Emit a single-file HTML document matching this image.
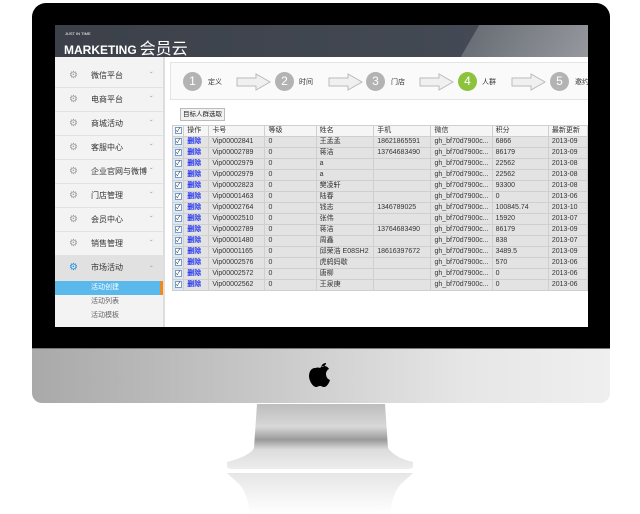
<!DOCTYPE html>
<html><head><meta charset="utf-8"><style>
*{margin:0;padding:0;box-sizing:border-box}
body{width:640px;height:514px;background:#fff;position:relative;overflow:hidden;font-family:"Liberation Sans","Noto Sans CJK SC",sans-serif}
.bezel{position:absolute;left:32px;top:3px;width:578px;height:346px;background:#000;border-radius:14px 14px 0 0}
.chin{position:absolute;left:32px;top:348px;width:578px;height:55px;background:linear-gradient(90deg,#a9a9a9,#c8c8c8 40%,#e6e6e6 75%,#efefef);border-radius:0 0 10px 10px;border-top:1px solid #777}
.screen{position:absolute;left:55px;top:25px;width:533px;height:302px;background:#fff;overflow:hidden}
.hdr{position:absolute;left:0;top:0;width:533px;height:32px;background:linear-gradient(90deg,#3b4049,#464c57)}
.hdr .hl{position:absolute;left:415px;top:0;width:140px;height:32px;background:linear-gradient(90deg,#6a6f77,#9a9da2);transform:skewX(-30deg)}
.logo{position:absolute;left:9px;top:10px;color:#fff;font-size:12px;font-weight:bold;letter-spacing:0}
.logo small{position:absolute;left:1px;top:-4px;font-size:4px;font-weight:normal}
.logo b{font-size:16px;font-weight:normal;margin-left:3px}
.side{position:absolute;left:0;top:32px;width:110px;height:270px;background:#f3f3f3;border-right:2px solid #ddd;padding-top:7px}
.it{height:24px;border-bottom:1px solid #e2e2e2;font-size:8px;color:#333;position:relative;line-height:24px;padding-left:36px}
.it:before{content:"⚙";position:absolute;left:14px;color:#999;font-size:10px;font-family:"DejaVu Sans",sans-serif}
.it:after{content:"ˇ";position:absolute;left:95px;top:0;color:#999;font-size:8px}
.it.act{background:#e1e1e1;height:25px}
.it.act:before{color:#1a8ee0}
.it.act:after{content:"ˆ";top:2px}
.sub{height:14px;font-size:7px;color:#666;line-height:14px;padding-left:36px}
.sub.on{background:#5ab8ea;color:#fff;border-right:3px solid #f08a1c}
.steps{position:absolute;left:115px;top:37px;width:420px;height:38px;background:#fafafa;border:1px solid #e4e4e4}
.c{position:absolute;top:9px;width:19px;height:19px;border-radius:50%;background:#b3b3b3;color:#fff;font-size:12px;text-align:center;line-height:19px}
.c.g{background:#8cc23c}
.sl{position:absolute;top:14px;font-size:7px;color:#333}
.arr{position:absolute;top:10px}
.btn{position:absolute;left:125px;top:83px;width:45px;height:13px;border:1px solid #bbb;background:#f2f2f2;font-size:6.5px;line-height:11px;text-align:center;color:#222}
table{position:absolute;left:117px;top:100px;border-collapse:collapse;font-size:7px;color:#333;background:#e3e3e3}
td{border:1px solid #cfcfcf;height:11px;padding:0 3px;white-space:nowrap;overflow:hidden;line-height:10px}
tr.h td{background:#f5f5f5}
.cb{width:12px;padding:0;text-align:center;background:#dde8f3}
.cb i{display:inline-block;width:7px;height:7px;border:1px solid #7a9cc6;background:#fff;font-size:6px;line-height:6px;color:#124;font-style:normal}
.del{color:#2233ee;font-weight:bold}
.stand{position:absolute;left:0;top:0}
</style></head><body>
<div class="bezel"></div>
<div class="screen">
 <div class="hdr"><div class="hl"></div><div class="logo"><small>JUST IN TIME</small>MARKETING<b>会员云</b></div></div>
 <div class="side">
  <div class="it">微信平台</div><div class="it">电商平台</div><div class="it">商城活动</div><div class="it">客服中心</div><div class="it">企业官网与微博</div><div class="it">门店管理</div><div class="it">会员中心</div><div class="it">销售管理</div><div class="it act">市场活动</div>
  <div class="sub on">活动创建</div><div class="sub">活动列表</div><div class="sub">活动模板</div>
 </div>
 <div class="steps">
  <div class="c" style="left:12px">1</div><div class="sl" style="left:37px">定义</div>
  <svg class="arr" style="left:65px" width="36" height="18"><path d="M1 5H20V1L34 9L20 17V13H1Z" fill="#f0f0f0" stroke="#bbb"/></svg>
  <div class="c" style="left:104px">2</div><div class="sl" style="left:128px">时间</div>
  <svg class="arr" style="left:157px" width="36" height="18"><path d="M1 5H20V1L34 9L20 17V13H1Z" fill="#f0f0f0" stroke="#bbb"/></svg>
  <div class="c" style="left:195px">3</div><div class="sl" style="left:220px">门店</div>
  <svg class="arr" style="left:248px" width="36" height="18"><path d="M1 5H20V1L34 9L20 17V13H1Z" fill="#f0f0f0" stroke="#bbb"/></svg>
  <div class="c g" style="left:287px">4</div><div class="sl" style="left:311px">人群</div>
  <svg class="arr" style="left:340px" width="36" height="18"><path d="M1 5H20V1L34 9L20 17V13H1Z" fill="#f0f0f0" stroke="#bbb"/></svg>
  <div class="c" style="left:379px">5</div><div class="sl" style="left:404px">邀约</div>
 </div>
 <div class="btn">目标人群选取</div>
 <table>
  <tr class="h"><td class="cb"><i>✓</i></td><td style="width:26px">操作</td><td style="width:58px">卡号</td><td style="width:58px">等级</td><td style="width:58px">姓名</td><td style="width:59px">手机</td><td style="width:57px">微信</td><td style="width:60px">积分</td><td style="width:40px">最新更新</td></tr>
  <tr><td class="cb"><i>✓</i></td><td class="del">删除</td><td>Vip00002841</td><td>0</td><td>王孟孟</td><td>18621865591</td><td>gh_bf70d7900c...</td><td>6866</td><td>2013-09</td></tr>
  <tr><td class="cb"><i>✓</i></td><td class="del">删除</td><td>Vip00002789</td><td>0</td><td>蒋洁</td><td>13764683490</td><td>gh_bf70d7900c...</td><td>86179</td><td>2013-09</td></tr>
  <tr><td class="cb"><i>✓</i></td><td class="del">删除</td><td>Vip00002979</td><td>0</td><td>a</td><td></td><td>gh_bf70d7900c...</td><td>22562</td><td>2013-08</td></tr>
  <tr><td class="cb"><i>✓</i></td><td class="del">删除</td><td>Vip00002979</td><td>0</td><td>a</td><td></td><td>gh_bf70d7900c...</td><td>22562</td><td>2013-08</td></tr>
  <tr><td class="cb"><i>✓</i></td><td class="del">删除</td><td>Vip00002823</td><td>0</td><td>樊凌轩</td><td></td><td>gh_bf70d7900c...</td><td>93300</td><td>2013-08</td></tr>
  <tr><td class="cb"><i>✓</i></td><td class="del">删除</td><td>Vip00001463</td><td>0</td><td>陆春</td><td></td><td>gh_bf70d7900c...</td><td>0</td><td>2013-06</td></tr>
  <tr><td class="cb"><i>✓</i></td><td class="del">删除</td><td>Vip00002764</td><td>0</td><td>钱志</td><td>1346789025</td><td>gh_bf70d7900c...</td><td>100845.74</td><td>2013-10</td></tr>
  <tr><td class="cb"><i>✓</i></td><td class="del">删除</td><td>Vip00002510</td><td>0</td><td>张伟</td><td></td><td>gh_bf70d7900c...</td><td>15920</td><td>2013-07</td></tr>
  <tr><td class="cb"><i>✓</i></td><td class="del">删除</td><td>Vip00002789</td><td>0</td><td>蒋洁</td><td>13764683490</td><td>gh_bf70d7900c...</td><td>86179</td><td>2013-09</td></tr>
  <tr><td class="cb"><i>✓</i></td><td class="del">删除</td><td>Vip00001480</td><td>0</td><td>周鑫</td><td></td><td>gh_bf70d7900c...</td><td>838</td><td>2013-07</td></tr>
  <tr><td class="cb"><i>✓</i></td><td class="del">删除</td><td>Vip00001165</td><td>0</td><td>邱荣浩 E08SH2</td><td>18616397672</td><td>gh_bf70d7900c...</td><td>3489.5</td><td>2013-09</td></tr>
  <tr><td class="cb"><i>✓</i></td><td class="del">删除</td><td>Vip00002576</td><td>0</td><td>虎鸫妈歇</td><td></td><td>gh_bf70d7900c...</td><td>570</td><td>2013-06</td></tr>
  <tr><td class="cb"><i>✓</i></td><td class="del">删除</td><td>Vip00002572</td><td>0</td><td>唐柳</td><td></td><td>gh_bf70d7900c...</td><td>0</td><td>2013-06</td></tr>
  <tr><td class="cb"><i>✓</i></td><td class="del">删除</td><td>Vip00002562</td><td>0</td><td>王泉庚</td><td></td><td>gh_bf70d7900c...</td><td>0</td><td>2013-06</td></tr>
 </table>
</div>
<div class="chin"></div>
<svg class="stand" width="640" height="514">
 <defs>
  <linearGradient id="sg" x1="0" y1="0" x2="0" y2="1">
   <stop offset="0" stop-color="#bdbdbd"/><stop offset=".35" stop-color="#d8d8d8"/><stop offset=".55" stop-color="#9a9a9a"/><stop offset=".7" stop-color="#dcdcdc"/><stop offset="1" stop-color="#ededed"/>
  </linearGradient>
  <linearGradient id="rg" x1="0" y1="0" x2="0" y2="1">
   <stop offset="0" stop-color="#e6e6e6"/><stop offset="1" stop-color="#fff"/>
  </linearGradient>
 </defs>
 <path d="M257 404H385L388 448Q395 458 413 462V466Q413 469 408 469H232Q227 469 227 466V462Q250 456 254 448Z" fill="url(#sg)"/>
 <path d="M227 473H413L400 485Q392 495 390 514H250Q248 495 240 485Z" fill="url(#rg)"/>
 <path d="M321 367c1-3 3-4 5-4c0 2-2 4-5 4zm-1 1c-2-1-4 0-5 0c-4 0-6 4-6 8c0 5 4 11 7 11c2 0 2-1 4-1s2 1 4 1c3 0 5-4 6-7c-3-1-4-4-4-6c0-2 1-4 3-5c-1-2-3-3-5-3c-2 0-3 1-4 2z" fill="#000"/>
</svg>
</body></html>
